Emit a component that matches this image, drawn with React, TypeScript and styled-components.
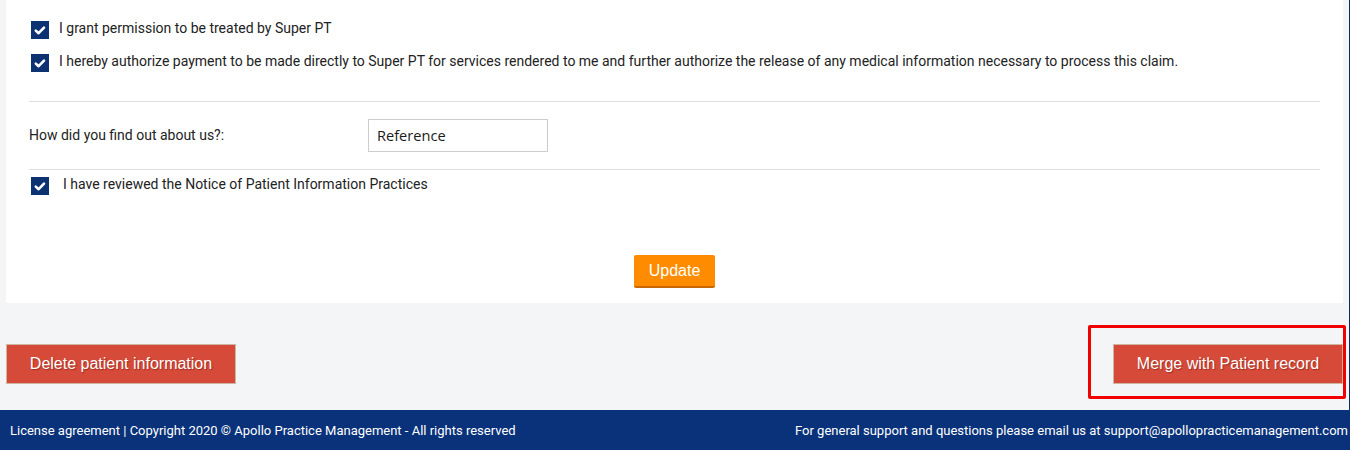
import React from 'react'
import styled, { createGlobalStyle } from 'styled-components'

const GlobalStyle = createGlobalStyle`
  html, body {
    margin: 0;
    padding: 0;
    background: #f4f5f7;
  }
  body {
    font-family: Roboto, 'Liberation Sans', Arial, sans-serif;
    color: #222;
  }
`

const Page = styled.div`
  width: 1349px;
  border-right: 1px solid #0b2b63;
  min-height: 450px;
  display: flex;
  flex-direction: column;
`

const Card = styled.div`
  margin: 0 6px;
  background: #fff;
  padding: 21px 23px 15px;
  display: flex;
  flex-direction: column;
`

const CheckRow = styled.label<{ $indent?: number; $gap?: number; $top?: number }>`
  display: flex;
  align-items: center;
  height: 18px;
  margin-left: 2px;
  margin-top: ${p => p.$top ?? 0}px;
  margin-bottom: ${p => p.$gap ?? 0}px;
  gap: ${p => 10 + (p.$indent ?? 0)}px;
  font-size: 14px;
  line-height: 18px;
  color: #222;
`

const RowText = styled.span`
  position: relative;
  top: -2px;
`

const Box = styled.span`
  width: 18px;
  height: 18px;
  flex-shrink: 0;
  background: #0c3272;
  display: flex;
  align-items: center;
  justify-content: center;
`

const Divider = styled.hr`
  border: 0;
  border-top: 1px solid #dedede;
  margin: 0;
`

const FieldRow = styled.div`
  display: flex;
  align-items: center;
  padding: 17px 0;
  font-size: 14px;
`

const FieldLabel = styled.span`
  width: 339px;
  padding-bottom: 2px;
`

const TextInput = styled.div`
  border: 1px solid #cccccc;
  display: flex;
  align-items: center;
  padding: 0 0 2px 8px;
  box-sizing: border-box;
  width: 180px;
  height: 33px;
  font-family: 'Open Sans', 'Noto Sans', sans-serif;
  font-size: 14.6px;
  color: #1a1a1a;
`

const ButtonRow = styled.div`
  display: flex;
  justify-content: center;
  margin-top: 60px;
`

const UpdateButton = styled.button`
  width: 81px;
  height: 33px;
  background: #ff8c00;
  border: 0;
  border-bottom: 2px solid #c96800;
  border-radius: 2px;
  color: #fff;
  font-family: 'Liberation Sans', Arial, sans-serif;
  font-size: 16px;
  padding: 0;
`

const Actions = styled.div`
  display: flex;
  justify-content: space-between;
  padding: 41px 6px 26px;
`

const DangerButton = styled.button`
  width: 230px;
  height: 40px;
  background: #d64a39;
  border: 1px solid #cdb6a4;
  color: #fff;
  font-family: 'Liberation Sans', Arial, sans-serif;
  font-size: 16px;
  text-shadow: 1px 1px 1px rgba(80, 20, 10, 0.45);
  padding: 0;
`

const Highlighted = styled.div`
  position: relative;
  &::after {
    content: '';
    position: absolute;
    top: -19px;
    bottom: -15px;
    left: -25px;
    right: -3px;
    border: 3px solid #f20000;
    border-radius: 2px;
    pointer-events: none;
  }
`

const Footer = styled.footer`
  background: #09327a;
  height: 40px;
  margin-right: -1px;
  display: flex;
  align-items: center;
  justify-content: space-between;
  padding: 0 2px 0 10px;
  color: #fff;
  font-size: 13px;
`

const Check = () => (
  <Box>
    <svg width="18" height="18" viewBox="0 0 18 18">
      <polyline points="4.8,9.6 7.6,12.2 13,6.6" fill="none" stroke="#fff" strokeWidth="2.6" strokeLinecap="round" strokeLinejoin="round" />
    </svg>
  </Box>
)

export default function App() {
  return (
    <>
      <GlobalStyle />
      <Page>
        <Card>
          <CheckRow $gap={15}>
            <Check />
            <RowText>I grant permission to be treated by Super PT</RowText>
          </CheckRow>
          <CheckRow $gap={29}>
            <Check />
            <RowText>
              I hereby authorize payment to be made directly to Super PT for services rendered to me and further authorize the release of any medical information necessary to process this claim.
            </RowText>
          </CheckRow>
          <Divider />
          <FieldRow>
            <FieldLabel>How did you find out about us?:</FieldLabel>
            <TextInput>Reference</TextInput>
          </FieldRow>
          <Divider />
          <CheckRow $indent={4} $top={7}>
            <Check />
            <RowText>I have reviewed the Notice of Patient Information Practices</RowText>
          </CheckRow>
          <ButtonRow>
            <UpdateButton>Update</UpdateButton>
          </ButtonRow>
        </Card>
        <Actions>
          <DangerButton>Delete patient information</DangerButton>
          <Highlighted>
            <DangerButton>Merge with Patient record</DangerButton>
          </Highlighted>
        </Actions>
        <Footer>
          <span>License agreement | Copyright 2020 © Apollo Practice Management - All rights reserved</span>
          <span>For general support and questions please email us at support@apollopracticemanagement.com</span>
        </Footer>
      </Page>
    </>
  )
}
